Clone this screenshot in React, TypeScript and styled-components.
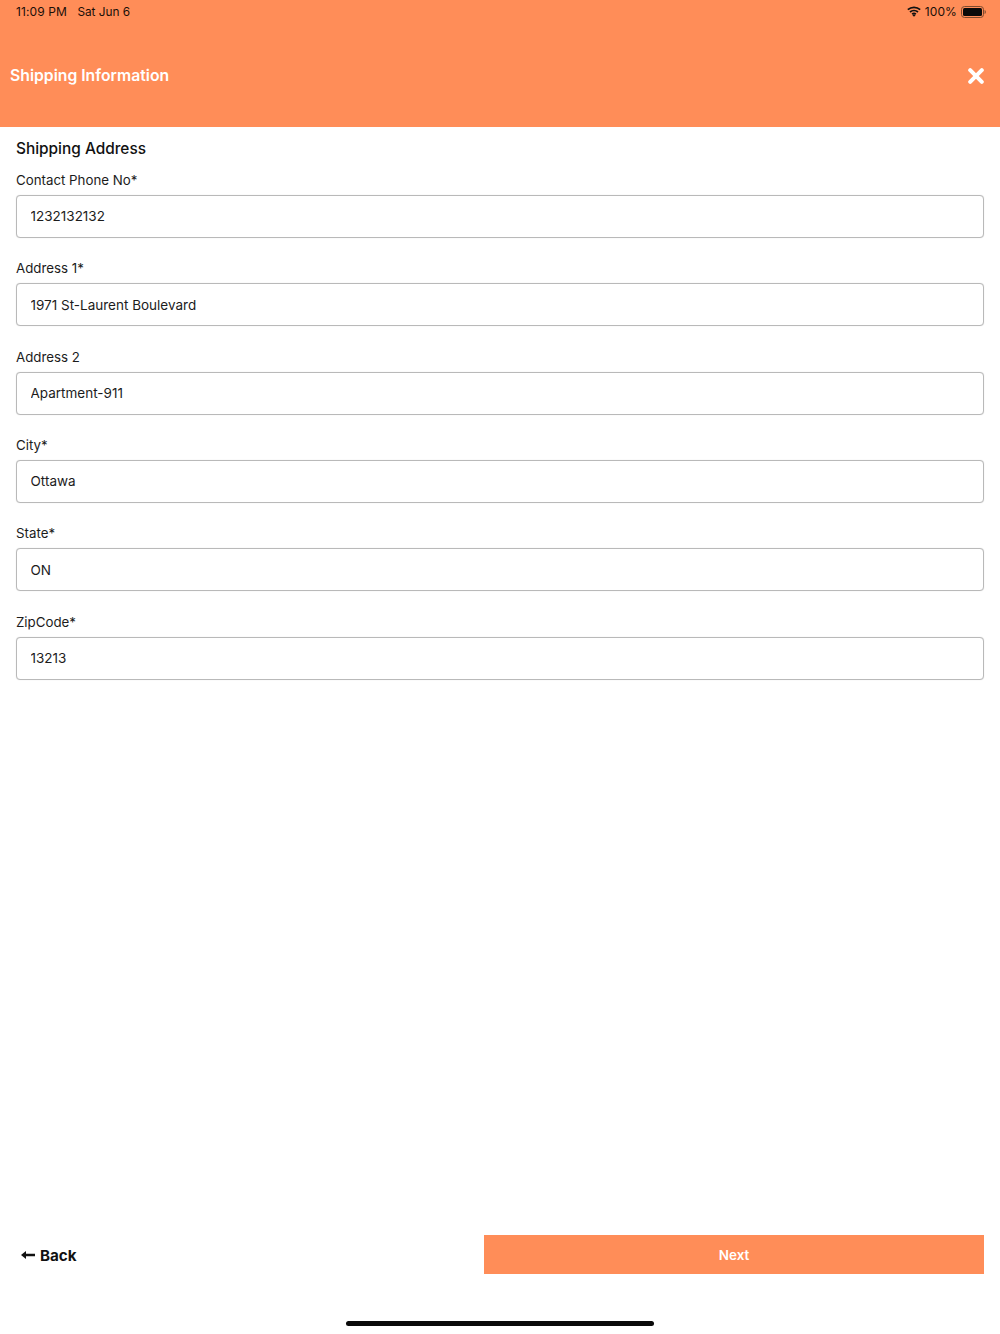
import React from "react";
import styled, { createGlobalStyle } from "styled-components";

const Global = createGlobalStyle`
  html, body { margin: 0; padding: 0; background: #fff; }
  body { font-family: Inter, "Liberation Sans", sans-serif; color: #111; }
`;

const Page = styled.div`
  width: 1000px;
  height: 1334px;
  display: flex;
  flex-direction: column;
  overflow: hidden;
  background: #fff;
`;

const Header = styled.header`
  height: 127px;
  background: #ff8d58;
  display: flex;
  flex-direction: column;
  flex: none;
`;

const StatusBar = styled.div`
  height: 23px;
  padding: 0 14px 1px 16px;
  display: flex;
  align-items: center;
  justify-content: space-between;
  font-size: 12px;
  font-weight: 400;
  color: #1a0f08;
`;

const StatusGroup = styled.div`
  display: flex;
  align-items: center;
  gap: ${(p: { $gap: number }) => p.$gap}px;
`;

const Time = styled.span`
  letter-spacing: 0.1px;
`;

const DateText = styled.span`
  font-size: 11.8px;
`;

const TitleRow = styled.div`
  flex: 1;
  padding: 0 16px 0 10px;
  display: flex;
  align-items: center;
  justify-content: space-between;
`;

const Title = styled.h1`
  margin: 0;
  font-size: 15.75px;
  line-height: 20px;
  font-weight: 600;
  color: #fff;
`;

const Form = styled.main`
  padding: 12px 16px 0;
  display: flex;
  flex-direction: column;
`;

const SectionTitle = styled.h2`
  margin: 0 0 11.8px;
  font-size: 15.4px;
  line-height: 20px;
  font-weight: 500;
  color: #111;
`;

const Field = styled.div`
  display: flex;
  flex-direction: column;
  gap: 5px;
  margin-bottom: 21.4px;
`;

const Label = styled.label`
  font-size: 13.3px;
  line-height: 19px;
  color: #1c1c1c;
`;

const Input = styled.input`
  box-sizing: border-box;
  width: 100%;
  height: 43px;
  padding: 0 13.5px;
  border: 1px solid #b9b9b9;
  border-radius: 4px;
  background: #fff;
  box-shadow: 0 0 1px rgba(0, 0, 0, 0.18);
  outline: none;
  font-family: inherit;
  font-size: 13.5px;
  color: #1c1c1c;
`;

const Footer = styled.footer`
  margin-top: auto;
  padding: 0 16px 60px 21px;
  display: flex;
  align-items: center;
  justify-content: space-between;
`;

const BackButton = styled.button`
  padding: 1px 0 0;
  border: 0;
  background: none;
  display: flex;
  align-items: center;
  gap: 5px;
  font-family: inherit;
  font-size: 15.2px;
  font-weight: 700;
  color: #111;
`;

const NextButton = styled.button`
  width: 500px;
  height: 39px;
  border: 0;
  background: #ff8d58;
  font-family: inherit;
  font-size: 13.5px;
  font-weight: 600;
  color: #fff;
`;

const HomeBar = styled.div`
  position: absolute;
  left: 346px;
  top: 1321px;
  width: 308px;
  height: 5px;
  border-radius: 3px;
  background: #0a0a0a;
`;

const Wifi = () => (
  <svg width="14" height="11" viewBox="0 0 14 11" fill="none" stroke="#111" strokeWidth="1.7">
    <path d="M0.8 3.7C4.3 0.5 9.7 0.5 13.2 3.7" />
    <path d="M3 6C5.3 4 8.7 4 11 6" />
    <path d="M5.1 8.2C6.2 7.3 7.8 7.3 8.9 8.2" />
    <path d="M7 10.8L5.3 9 7 8.2 8.7 9Z" fill="#111" stroke="none" />
  </svg>
);

const Battery = () => (
  <svg width="25" height="12" viewBox="0 0 25 12">
    <rect x="0.5" y="0.5" width="22" height="11" rx="3" fill="none" stroke="#7d4a2e" />
    <rect x="2" y="2" width="19" height="8" rx="1.5" fill="#0a0a0a" />
    <path d="M23.6 4v4c.8-.3 1.2-1.1 1.2-2s-.4-1.7-1.2-2Z" fill="#7d4a2e" />
  </svg>
);

const CloseIcon = () => (
  <svg width="16" height="16" viewBox="0 0 16 16" stroke="#fff" strokeWidth="4" strokeLinecap="round">
    <path d="M2.2 2.2L13.8 13.8M13.8 2.2L2.2 13.8" />
  </svg>
);

const BackArrow = () => (
  <svg width="14" height="10" viewBox="0 0 14 10" fill="#111">
    <path d="M0 5L5 1V3.7H14V6.3H5V9Z" />
  </svg>
);

const fields = [
  { label: "Contact Phone No*", value: "1232132132" },
  { label: "Address 1*", value: "1971 St-Laurent Boulevard" },
  { label: "Address 2", value: "Apartment-911" },
  { label: "City*", value: "Ottawa" },
  { label: "State*", value: "ON" },
  { label: "ZipCode*", value: "13213" },
];

export default function App() {
  return (
    <Page>
      <Global />
      <Header>
        <StatusBar>
          <StatusGroup $gap={10.5}>
            <Time>11:09 PM</Time>
            <DateText>Sat Jun 6</DateText>
          </StatusGroup>
          <StatusGroup $gap={4}>
            <Wifi />
            <Time>100%</Time>
            <Battery />
          </StatusGroup>
        </StatusBar>
        <TitleRow>
          <Title>Shipping Information</Title>
          <CloseIcon />
        </TitleRow>
      </Header>
      <Form>
        <SectionTitle>Shipping Address</SectionTitle>
        {fields.map((f) => (
          <Field key={f.label}>
            <Label>{f.label}</Label>
            <Input defaultValue={f.value} readOnly />
          </Field>
        ))}
      </Form>
      <Footer>
        <BackButton>
          <BackArrow />
          Back
        </BackButton>
        <NextButton>Next</NextButton>
      </Footer>
      <HomeBar />
    </Page>
  );
}
